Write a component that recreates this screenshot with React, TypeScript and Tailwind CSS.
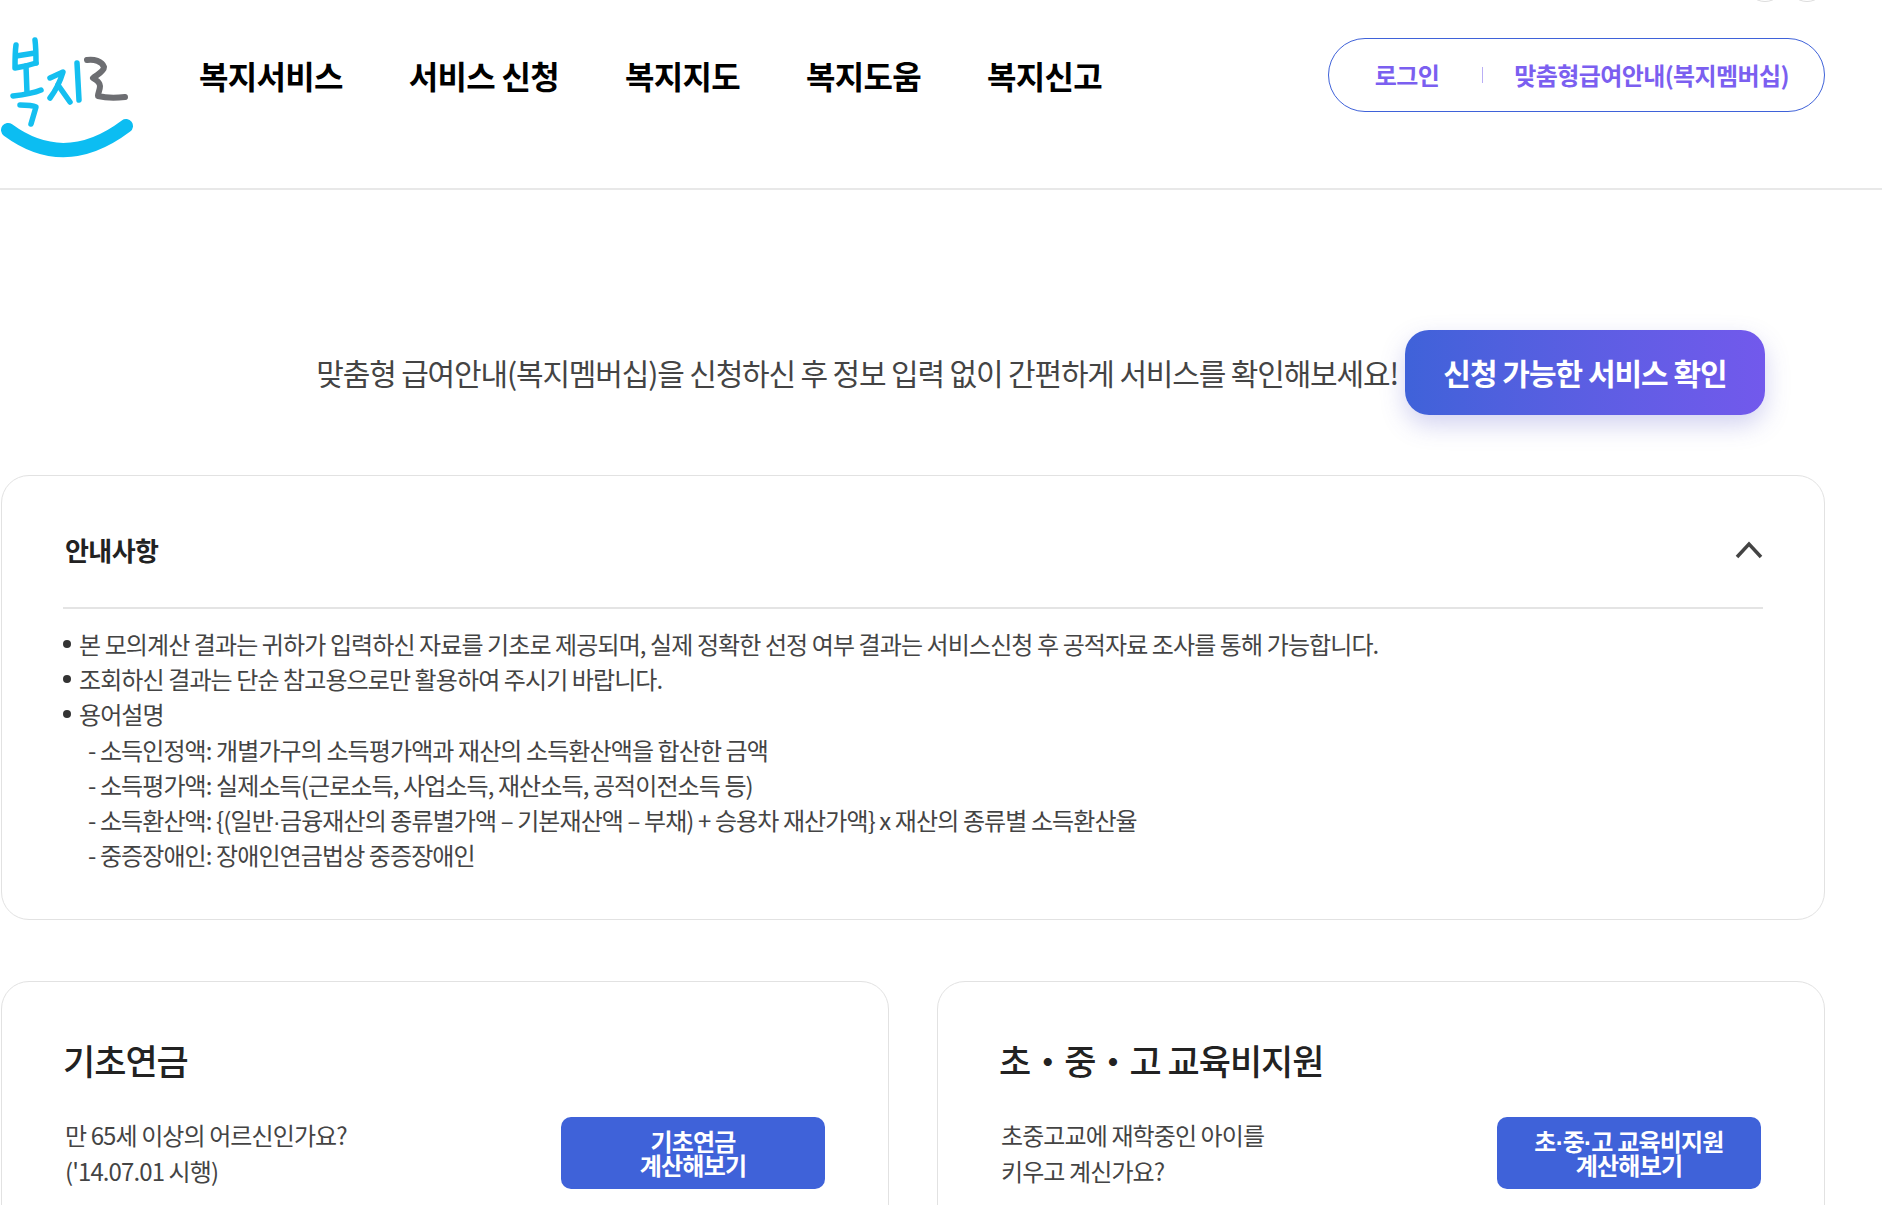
const font = '"Noto Sans CJK KR", "Noto Sans", sans-serif';

const navItems = ['복지서비스', '서비스 신청', '복지지도', '복지도움', '복지신고'];

const noticeLines = [
  '본 모의계산 결과는 귀하가 입력하신 자료를 기초로 제공되며, 실제 정확한 선정 여부 결과는 서비스신청 후 공적자료 조사를 통해 가능합니다.',
  '조회하신 결과는 단순 참고용으로만 활용하여 주시기 바랍니다.',
  '용어설명',
];

const cards = [
  {
    title: '기초연금',
    lines: ['만 65세 이상의 어르신인가요?', "('14.07.01 시행)"],
    button: <>기초연금</>,
  },
  {
    title: '초・중・고 교육비지원',
    lines: ['초중고교에 재학중인 아이를', '키우고 계신가요?'],
    button: (
      <>
        초<Dot />중<Dot />고 교육비지원
      </>
    ),
  },
];

// the reference's middle dot is the narrow latin one, not the full CJK width
function Dot() {
  return <span className="font-['Liberation_Sans'] leading-[0]">·</span>;
}

function Logo() {
  return (
    <svg width="136" height="170" viewBox="0 0 136 170" fill="none" strokeLinecap="round" strokeLinejoin="round">
      <g stroke="#14bff0" strokeWidth="5.5">
        <path d="M16 45 C15 52 15 60 15 68 C22 67 30 65 36 63" />
        <path d="M35 40 C36 48 36 56 36 63" />
        <path d="M16 56 L35 53" />
        <path d="M13 96 C22 95 34 93 41 90" />
        <path d="M26 66 L27 93" />
        <path d="M20 105 C26 105 32 105 36 107 L31 124" />
        <path d="M50 78 L63 72 C60 82 56 90 50 98" />
        <path d="M58 85 L70 102" />
        <path d="M77 63 L79 100" />
      </g>
      <path d="M87 60 C94 59 102 61 104 67 C104 72 96 75 93 78 C96 80 100 82 100 86 C100 90 98 93 98 96 C106 98 116 98 125 97" stroke="#6d6e72" strokeWidth="6" />
      <path d="M8 130 Q 65 172 126 126" stroke="#0cbdf2" strokeWidth="14" />
    </svg>
  );
}

export default function App() {
  return (
    <div className="relative h-[1205px] overflow-hidden bg-white" style={{ fontFamily: font }}>
      {/* top utility circles, cut off by the viewport */}
      <div className="absolute right-[55px] -top-[38px] flex gap-[2px]">
        <span className="h-[40px] w-[40px] rounded-full border border-[#ddd]" />
        <span className="h-[40px] w-[40px] rounded-full border border-[#ddd]" />
      </div>

      <header className="h-[190px] border-b-2 border-[#e8e8e8]">
        <div className="flex w-[1825px] items-start">
          <div className="w-[199px]">
            <Logo />
          </div>
          <nav className="flex gap-[66px] pt-[50px]">
            {navItems.map((item) => (
              <a key={item} className="text-[32px] leading-[50px] font-bold tracking-[-0.7px] text-black">
                {item}
              </a>
            ))}
          </nav>
          <div className="ml-auto mt-[38px] flex h-[74px] items-center rounded-full border border-[#3f62d9] pr-[35px] pl-[46px] text-[24px] font-bold tracking-[-0.6px] text-[#7b5ff0]">
            <span>로그인</span>
            <span className="mr-[31px] ml-[43px] h-[16px] w-px bg-[#b9aef5]" />
            <span>맞춤형급여안내(복지멤버십)</span>
          </div>
        </div>
      </header>

      <main className="w-[1825px] pl-px">
        <div className="flex items-center justify-end pt-[140px] pr-[60px]">
          <p className="mr-[7px] text-[30px] tracking-[-1.15px] text-[#444]">
            맞춤형 급여안내(복지멤버십)을 신청하신 후 정보 입력 없이 간편하게 서비스를 확인해보세요!
          </p>
          <button className="h-[85px] w-[360px] rounded-[24px] bg-gradient-to-r from-[#3f62d9] to-[#7259ec] text-[30px] font-bold tracking-[-1px] text-white shadow-[0_10px_24px_rgba(80,80,200,0.25)]">
            신청 가능한 서비스 확인
          </button>
        </div>

        <section className="mt-[60px] rounded-[28px] border border-[#e2e2e2] px-[61px] pt-[52px] pb-[47px]">
          <div className="flex items-center justify-between border-b-2 border-[#e4e4e4] pb-[35px] pl-[2px]">
            <h2 className="text-[26px] leading-[44px] font-bold tracking-[-0.6px] text-[#222]">안내사항</h2>
            <svg width="28" height="18" viewBox="0 0 28 18" fill="none">
              <path d="M2 16 L14 3 L26 16" stroke="#444" strokeWidth="3.5" />
            </svg>
          </div>
          <ul className="pt-[17px] text-[24px] leading-[35px] tracking-[-0.9px] text-[#444]">
            {noticeLines.map((line) => (
              <li key={line} className="flex items-center">
                <span className="mr-[8px] h-[8px] w-[8px] rounded-full bg-[#333]" />
                {line}
              </li>
            ))}
            <li className="mt-px pl-[25px]">- 소득인정액: 개별가구의 소득평가액과 재산의 소득환산액을 합산한 금액</li>
            <li className="pl-[25px]">- 소득평가액: 실제소득(근로소득, 사업소득, 재산소득, 공적이전소득 등)</li>
            <li className="pl-[25px]">
              - 소득환산액: {'{'}(일반
              <Dot />
              금융재산의 종류별가액 – 기본재산액 – 부채) + 승용차 재산가액{'}'} x 재산의 종류별 소득환산율
            </li>
            <li className="pl-[25px]">- 중증장애인: 장애인연금법상 중증장애인</li>
          </ul>
        </section>

        <div className="mt-[61px] grid grid-cols-2 gap-[48px]">
          {cards.map((card) => (
            <section key={card.title} className="h-[300px] rounded-[28px] border border-[#e2e2e2] px-[62px] pt-[54px]">
              <h3 className="-ml-px text-[35px] leading-[48px] font-medium tracking-[-1px] text-[#222]">{card.title}</h3>
              <div className="mt-[33px] flex items-start justify-between">
                <p className="pl-[1px] text-[24px] leading-[36px] tracking-[-0.9px] text-[#444]">
                  {card.lines[0]}
                  <br />
                  {card.lines[1]}
                </p>
                <button className="mr-px h-[72px] w-[264px] rounded-[10px] bg-[#3f62d9] text-[24px] leading-[24px] font-bold tracking-[-0.8px] text-white">
                  {card.button}
                  <br />
                  계산해보기
                </button>
              </div>
            </section>
          ))}
        </div>
      </main>
    </div>
  );
}
